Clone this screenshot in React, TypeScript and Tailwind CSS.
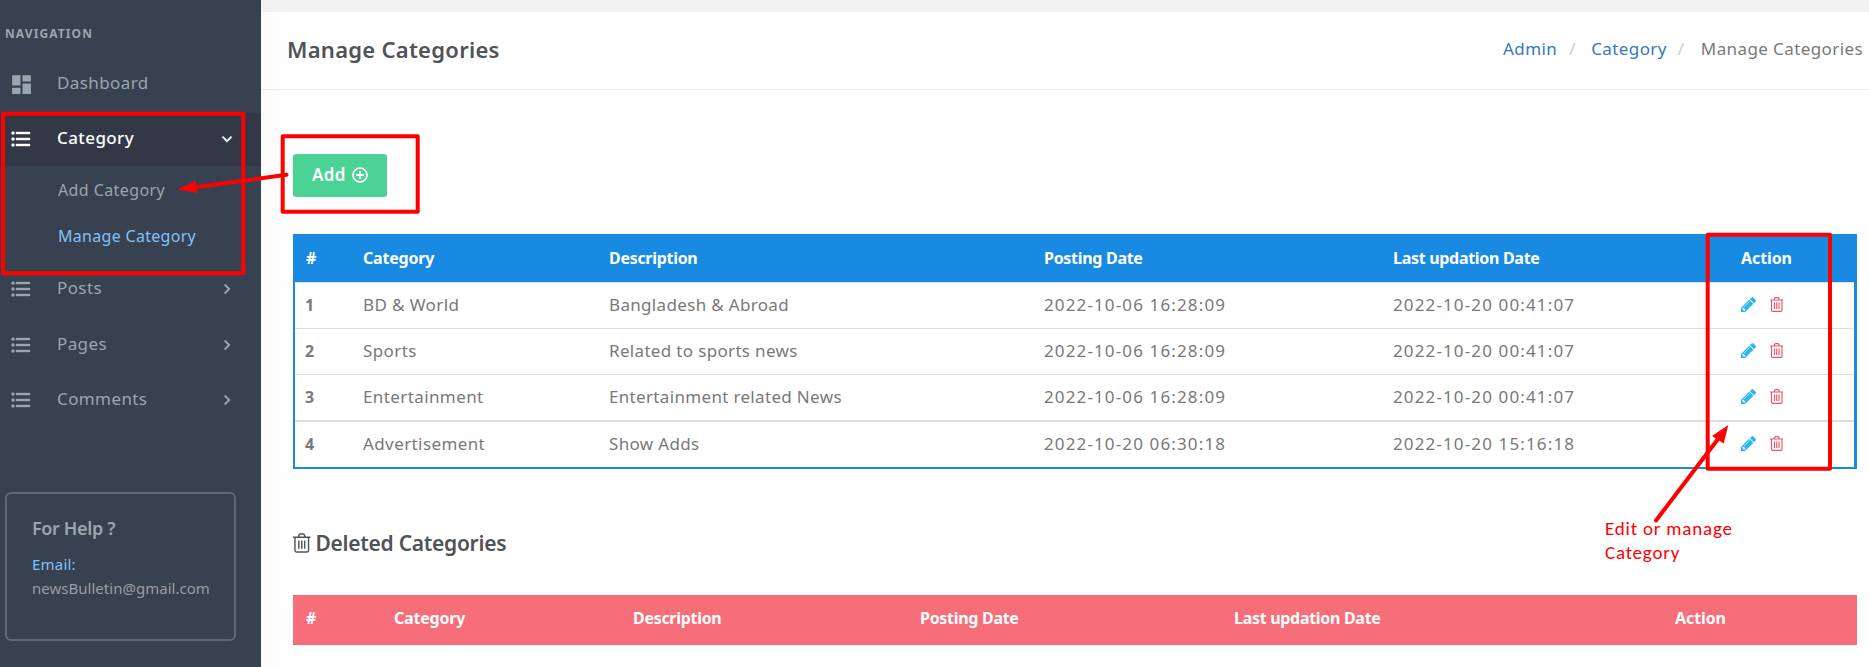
import type { ReactNode } from "react";

function DashboardIcon() {
  return (
    <svg viewBox="0 0 24 24" className="size-[25px] shrink-0" fill="currentColor">
      <path d="M13,3V9H21V3M13,21H21V11H13M3,21H11V15H3M3,13H11V3H3V13Z" />
    </svg>
  );
}

function ListIcon() {
  return (
    <svg viewBox="0 0 24 24" className="mb-[2px] size-[24px] shrink-0" fill="currentColor" stroke="currentColor" strokeWidth="0.4">
      <path d="M7,5H21V7H7V5M7,13V11H21V13H7M4,4.5A1.5,1.5 0 0,1 5.5,6A1.5,1.5 0 0,1 4,7.5A1.5,1.5 0 0,1 2.5,6A1.5,1.5 0 0,1 4,4.5M4,10.5A1.5,1.5 0 0,1 5.5,12A1.5,1.5 0 0,1 4,13.5A1.5,1.5 0 0,1 2.5,12A1.5,1.5 0 0,1 4,10.5M7,19V17H21V19H7M4,16.5A1.5,1.5 0 0,1 5.5,18A1.5,1.5 0 0,1 4,19.5A1.5,1.5 0 0,1 2.5,18A1.5,1.5 0 0,1 4,16.5Z" />
    </svg>
  );
}

function Chevron({ open }: { open?: boolean }) {
  return (
    <svg
      viewBox="0 0 24 24"
      className={open ? "mb-[2px] size-[20px] rotate-90" : "mb-[2px] size-[20px]"}
      fill="currentColor"
      stroke="currentColor"
      strokeWidth="0.5"
    >
      <path d="M8.59,16.58L13.17,12L8.59,7.41L10,6L16,12L10,18L8.59,16.58Z" />
    </svg>
  );
}

function TrashIcon({ className }: { className: string }) {
  return (
    <svg viewBox="0 0 18 20" className={className} fill="none" stroke="currentColor" strokeWidth="1.5">
      <path d="M0 4H18M2 4V17.8Q2 19.2 3.5 19.2H14.500Q16 19.2 16 17.8V4M5.500 4L6.300 1.700Q6.600 .8 7.500 .8H10.500Q11.400 .8 11.700 1.700L12.500 4M6 7.300V16M9 7.300V16M12 7.300V16" />
    </svg>
  );
}

function PencilIcon() {
  return (
    <svg viewBox="128 149 1515 1515" className="size-[15px] text-[#29b6f6]" fill="currentColor">
      <path d="M491 1536l91-91-235-235-91 91v107h128v128h107zm523-928q0-22-22-22-10 0-17 7l-542 542q-7 7-7 17 0 22 22 22 10 0 17-7l542-542q7-7 7-17zm-54-192l416 416-832 832h-416v-416zm683 96q0 53-37 90l-166 166-416-416 166-165q36-38 90-38 53 0 91 38l235 234q37 39 37 91z" />
    </svg>
  );
}

function NavItem({ icon, label, className, chevron, open }: { icon: ReactNode; label: string; className: string; chevron?: boolean; open?: boolean }) {
  return (
    <div className={`flex h-[53px] items-center pr-[24px] pl-[9px] text-[17px] ${className}`}>
      <span className="flex w-[48px]">{icon}</span>
      <span className="flex-1 pb-[4px] tracking-[0.4px]">{label}</span>
      {chevron && <Chevron open={open} />}
    </div>
  );
}

function Sidebar() {
  return (
    <aside className="flex h-[667px] w-[261px] shrink-0 flex-col bg-[#38414f] text-[#98a6ad]">
      <div className="h-[58px] pt-[24px] pl-[5px] text-[12px] leading-[20px] font-bold tracking-[1.1px]">NAVIGATION</div>
      <NavItem icon={<DashboardIcon />} label="Dashboard" className="" />
      <NavItem icon={<ListIcon />} label="Category" className="mt-[2px] bg-[#323846] font-medium text-white" chevron open />
      <div className="flex h-[97px] flex-col pt-px pl-[58px] text-[16px] leading-[46px]">
        <span className="tracking-[0.4px]">Add Category</span>
        <span className="tracking-[0.3px] text-[#7fc1fc]">Manage Category</span>
      </div>
      <NavItem icon={<ListIcon />} label="Posts" className="" chevron />
      <NavItem icon={<ListIcon />} label="Pages" className="mt-[3px]" chevron />
      <NavItem icon={<ListIcon />} label="Comments" className="mt-[2px]" chevron />
      <div className="mt-[65px] ml-[5px] h-[149px] w-[231px] rounded-[6px] border-2 border-[#5e6a72] pt-[22px] pl-[25px]">
        <h5 className="text-[18px] leading-[24px] font-semibold tracking-[-0.37px]">For Help ?</h5>
        <p className="mt-[12px] text-[15px] leading-[24px] tracking-[0.2px] text-[#7fc1fc]">Email:</p>
        <p className="text-[15px] leading-[24px] tracking-[0.02px] text-[#9a9da3]">newsBulletin@gmail.com</p>
      </div>
    </aside>
  );
}

const rows = [
  ["1", "BD & World", "Bangladesh & Abroad", "2022-10-06 16:28:09", "2022-10-20 00:41:07"],
  ["2", "Sports", "Related to sports news", "2022-10-06 16:28:09", "2022-10-20 00:41:07"],
  ["3", "Entertainment", "Entertainment related News", "2022-10-06 16:28:09", "2022-10-20 00:41:07"],
  ["4", "Advertisement", "Show Adds", "2022-10-20 06:30:18", "2022-10-20 15:16:18"],
];

function HeadCells() {
  return (
    <>
      <span>#</span>
      <span className="tracking-[-0.2px]">Category</span>
      <span className="tracking-[-0.3px]">Description</span>
      <span className="tracking-[-0.3px]">Posting Date</span>
      <span className="tracking-[-0.3px]">Last updation Date</span>
      <span className="tracking-[-0.1px]">Action</span>
    </>
  );
}

function CategoryTable() {
  return (
    <div className="border-2 border-t-0 border-r-[3px] border-[#188ae2]">
      <div className="grid h-[48px] grid-cols-[57px_246px_435px_349px_348px_1fr] items-center bg-[#188ae2] pl-[11px] text-[16px] font-bold text-white">
        <HeadCells />
      </div>
      {rows.map((r, i) => (
        <div
          key={r[0]}
          className={`grid grid-cols-[58px_246px_435px_349px_348px_1fr] items-center border-[#dddddd] pb-[2px] pl-[10px] text-[17px] text-[#797979] ${i === 3 ? "h-[47px] border-t-2" : "h-[46px] border-t"}`}
        >
          <span className="text-[16px] font-bold">{r[0]}</span>
          <span className="tracking-[0.4px]">{r[1]}</span>
          <span className="tracking-[0.33px]">{r[2]}</span>
          <span className="tracking-[1.13px]">{r[3]}</span>
          <span className="tracking-[1.13px]">{r[4]}</span>
          <span className="flex items-center gap-[13.500px]">
            <PencilIcon />
            <TrashIcon className="h-[15px] w-[13.500px] text-[#ef5363]" />
          </span>
        </div>
      ))}
    </div>
  );
}

function Annotations() {
  return (
    <>
      <svg className="pointer-events-none absolute top-0 left-0" width="1869" height="667" fill="none" stroke="#ff0000" strokeWidth="4" strokeLinejoin="round" strokeLinecap="round">
        <rect x="3" y="113.700" width="240.300" height="159.500" />
        <rect x="282.700" y="136.300" width="135" height="75.400" />
        <rect x="1707.700" y="234.700" width="122.300" height="234" />
        <path d="M286.500 174.700L195 187.300M1656 520.500L1718 439" />
        <path d="M177 189.500L195.500 181L197 193ZM1728.300 425L1712 436L1723.700 443.500Z" fill="#ff0000" stroke="none" />
      </svg>
      <p className="absolute top-[517px] left-[1605px] font-[Carlito] text-[19px] leading-[24px] tracking-[0.8px] text-[#ff0000]">
        Edit or manage
        <br />
        Category
      </p>
    </>
  );
}

export default function App() {
  return (
    <div className="relative flex h-[667px] w-[1869px] overflow-hidden bg-white font-['Noto_Sans','Open_Sans',sans-serif]">
      <Sidebar />
      <main className="flex flex-1 flex-col">
        <div className="h-[12px] bg-[#f2f2f2]" />
        <div className="flex-1 bg-linear-to-r from-[#fafafa] to-white to-[28px]">
          <header className="flex h-[78px] items-center justify-between border-b border-[#ebebeb] pr-[6px] pb-[3px] pl-[26px]">
            <h4 className="text-[22px] font-semibold tracking-[0.27px] text-[#505458]">Manage Categories</h4>
            <nav className="flex pb-px text-[17px] tracking-[0.4px] text-[#797979]">
              <a className="text-[#337ab7]">Admin</a>
              <span className="w-[34px] pl-[12px] text-[#cccccc]">/</span>
              <a className="text-[#337ab7]">Category</a>
              <span className="w-[34px] pl-[11px] text-[#cccccc]">/</span>
              <span>Manage Categories</span>
            </nav>
          </header>
          <div className="flex flex-col pt-[64px] pr-[12px] pl-[32px]">
            <button className="flex h-[43px] w-[94px] items-center gap-[6px] rounded-[3px] bg-[#4bd396] pb-[2px] pl-[19px] text-[17px] font-semibold tracking-[0.4px] text-white">
              Add
              <svg viewBox="0 0 16 16" className="size-[16px]" fill="none" stroke="currentColor" strokeWidth="1.700">
                <circle cx="8" cy="8" r="7" />
                <path d="M8 4V12M4 8H12" strokeWidth="2" />
              </svg>
            </button>
            <div className="mt-[37px]">
              <CategoryTable />
            </div>
            <h4 className="mt-[60px] flex h-[30px] items-center gap-[5px] text-[21px] font-semibold tracking-[-0.27px] text-[#505458]">
              <TrashIcon className="mb-[2px] h-[20px] w-[17.500px]" />
              Deleted Categories
            </h4>
            <div className="mt-[36px] grid h-[50px] grid-cols-[88px_239px_287px_314px_441px_1fr] items-center bg-[#f66e7a] pb-[4px] pl-[13px] text-[16px] font-bold text-white">
              <HeadCells />
            </div>
          </div>
        </div>
      </main>
      <Annotations />
    </div>
  );
}
